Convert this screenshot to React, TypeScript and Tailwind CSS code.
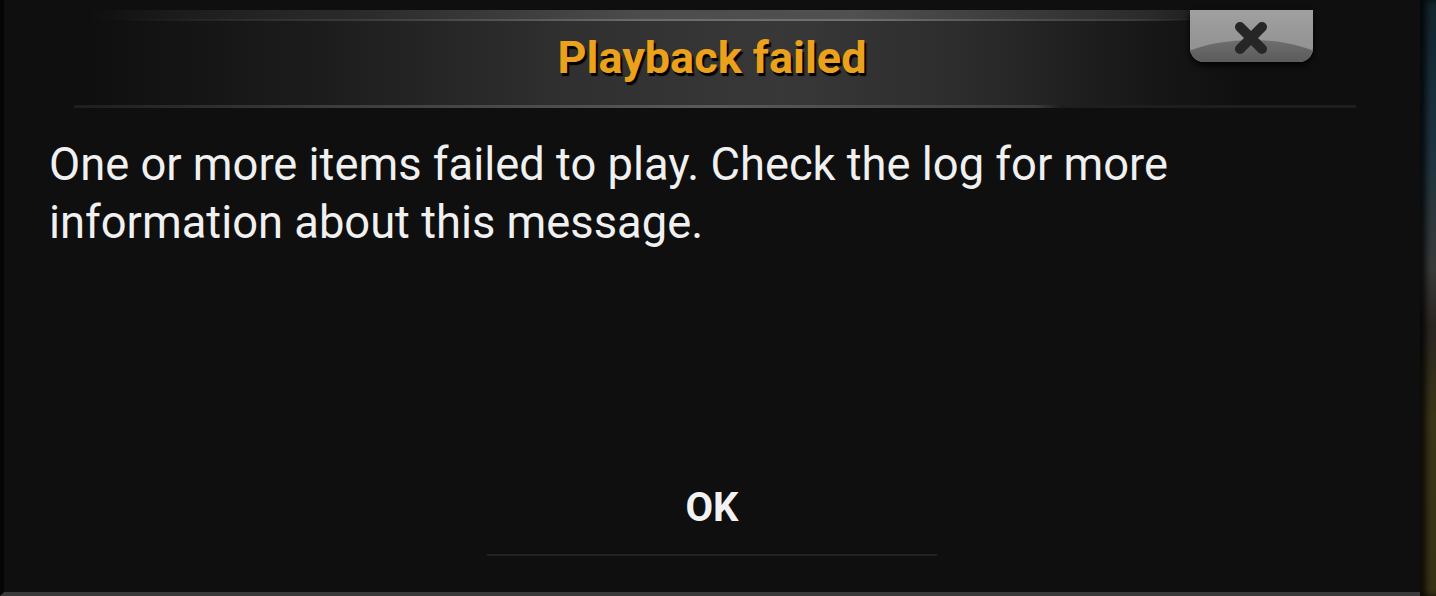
import React from 'react';

const font = { fontFamily: 'Roboto, "Noto Sans", sans-serif' };

const CloseButton: React.FC = () => (
  <div className="absolute right-[107px] top-[10px] h-[52px] w-[123px] overflow-hidden rounded-b-[14px] bg-[linear-gradient(180deg,#a0a0a0_0%,#8e8e8e_100%)] shadow-[0_3px_6px_rgba(0,0,0,0.9)]">
    <div className="absolute inset-x-[-24px] top-[30px] h-[70px] rounded-[50%] bg-[linear-gradient(180deg,#6e6e6e,#565656_40%)]" />
    <svg className="absolute left-[42px] top-[11px]" width="38" height="34" viewBox="0 0 38 34">
      <path d="M8 6 L30 28 M30 6 L8 28" stroke="#262626" strokeWidth="10" strokeLinecap="round" />
    </svg>
  </div>
);

export default function App() {
  return (
    <div className="flex h-[596px] w-[1436px] overflow-hidden bg-[#0b0b0b]" style={font}>
      <div className="relative flex w-[1420px] flex-col border-b-4 border-l-4 border-b-[#3a3a3a] border-l-[#050505] bg-[#0f0f0f]">
        <header className="relative h-[108px] pt-[10px]">
          <div className="relative h-[96px] bg-[linear-gradient(90deg,transparent_6%,#1c1c1c_22%,#303030_40%,#383838_55%,#2c2c2c_68%,#181818_80%,transparent_88%)]">
            <div className="absolute inset-x-0 top-0 h-[10px] bg-[linear-gradient(90deg,transparent_6%,#2a2a2a_25%,#4c4c4c_45%,#505050_60%,#2c2c2c_80%,transparent_88%)]" />
            <div className="absolute inset-x-0 top-[9px] h-[2px] bg-[linear-gradient(90deg,transparent_8%,#3a3a3a_25%,#6c6c6c_45%,#707070_60%,#3a3a3a_80%,transparent_84%)]" />
            <div className="flex h-full items-center justify-center pb-[2px]">
              <h1 className="text-[45px] font-bold leading-none text-[#eba11b] [text-shadow:2px_3px_1px_#000]">
                Playback failed
              </h1>
            </div>
          </div>
          <div className="absolute bottom-0 left-[70px] h-[3px] w-[1282px] bg-[linear-gradient(90deg,#1e1e1e,#3c3c3c_20%,#5a5a5a_50%,#3c3c3c_75%,#1e1e1e_77%,#1e1e1e)]" />
          <CloseButton />
        </header>

        <main className="flex flex-1 flex-col px-[45px] pt-[28px]">
          <p className="text-[45.3px] leading-[58px] text-[#f0f0f0]">
            One or more items failed to play. Check the log for more information about this message.
          </p>
        </main>

        <div className="flex justify-center pb-[36px]">
          <div className="flex w-[450px] flex-col items-center border-b-2 border-[#222]">
            <span className="pb-[26px] text-[40px] font-bold leading-none text-[#f2f2f2]">OK</span>
          </div>
        </div>
      </div>
      <div className="w-[16px] bg-[linear-gradient(180deg,#12252d_0%,#1d3440_25%,#3a3a3a_45%,#2a2622_55%,#3d3518_70%,#3a3214_100%)] shadow-[inset_6px_0_6px_rgba(0,0,0,0.8)]" />
    </div>
  );
}
